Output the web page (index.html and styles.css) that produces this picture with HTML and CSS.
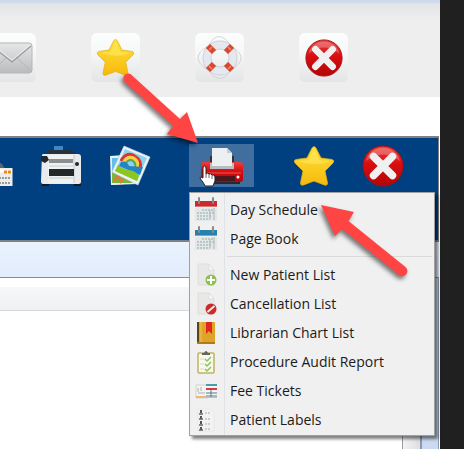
FILE: index.html
```
<!DOCTYPE html>
<html lang="en">
<head>
    <meta charset="UTF-8">
    <meta name="viewport" content="width=device-width, initial-scale=1.0">
    <title>Print Menu</title>
    <link rel="stylesheet" href="styles.css">
</head>
<body>
    <!-- Shared shapes -->
    <svg class="defs" aria-hidden="true">
        <defs>
            <linearGradient id="gold" x1="0" y1="0" x2="0" y2="1">
                <stop offset="0" stop-color="#ffe23a"/>
                <stop offset="1" stop-color="#f7b90c"/>
            </linearGradient>
            <linearGradient id="red" x1="0" y1="0" x2="0" y2="1">
                <stop offset="0" stop-color="#e8413f"/>
                <stop offset=".45" stop-color="#d90d10"/>
                <stop offset="1" stop-color="#b30507"/>
            </linearGradient>
            <linearGradient id="silver" x1="0" y1="0" x2="0" y2="1">
                <stop offset="0" stop-color="#e6e7e8"/>
                <stop offset="1" stop-color="#b9bbbd"/>
            </linearGradient>
            <symbol id="star" viewBox="0 0 42 42">
                <path d="M19 3Q21 0 23 3L28 13 39 14.500Q42 15.500 40 18L32 26 34.500 38Q34.500 41 31.500 40L21 36 10.500 40Q7.500 41 7.500 38L10 26 2 18Q0 15.500 3 14.500L14 13Z" fill="url(#gold)" stroke="#e3b11b" stroke-width=".8" stroke-linejoin="round"/>
                <path d="M21 4 26.500 15 37 16Q27 20 21 19Q12 19 5 16L15.500 15Z" fill="#fff27a" opacity=".4"/>
            </symbol>
            <symbol id="cross" viewBox="0 0 42 42">
                <circle cx="21" cy="21" r="20" fill="url(#red)" stroke="#a50f12" stroke-width="1"/>
                <path d="M4 16A17.500 17.500 0 0 1 38 16Q21 3 4 16Z" fill="#fff" opacity=".25"/>
                <path d="M11.500 11.500 30.500 30.500M30.500 11.500 11.500 30.500" stroke="#f0f0f0" stroke-width="7.500" stroke-linecap="round"/>
            </symbol>
            <symbol id="page" viewBox="0 0 26 26">
                <path d="M5 2H16L21 8V23H5Z" fill="#e8e8e7" stroke="#dededc"/>
                <path d="M16 2V8H21Z" fill="#f8f8f8" stroke="#dadada" stroke-width=".7"/>
            </symbol>
            <symbol id="calendar" viewBox="0 0 26 26">
                <path d="M2 9H24V24H2Z" fill="#e4e7e8"/>
                <path d="M9 13H20M4 16H22M4 19H19M4 22H17" stroke="#b9c9c9" stroke-width="2" stroke-dasharray="2 1"/>
                <path d="M17 13V22M21 11V23" stroke="#b0b8bb"/>
                <path d="M2 4H24V10H2Z" fill="currentColor"/>
                <path d="M6 1V6M20 1V6" stroke="#8a8a8c" stroke-width="2" stroke-linecap="round"/>
                <path d="M2 10H24" stroke="#fff" stroke-width=".7"/>
            </symbol>
        </defs>
    </svg>

    <div class="window">
        <header class="banner">
            <button class="tile" aria-label="Mail">
                <svg viewBox="0 0 49 49">
                    <rect x="4" y="10" width="41" height="30" rx="3" fill="url(#silver)" stroke="#b4b6b8"/>
                    <path d="M5 38 19 25M44 38 30 25" fill="none" stroke="#b4b6b8"/>
                    <path d="M5 13 25 29 44 13" fill="none" stroke="#999b9d" stroke-width="1.200"/>
                    <path d="M6 12 25 27 43 12" fill="none" stroke="#f4f4f4" stroke-width=".8"/>
                </svg>
            </button>
            <button class="tile" aria-label="Favorites">
                <svg viewBox="0 0 49 49"><use href="#star" x="5" y="5" width="39" height="39"/></svg>
            </button>
            <button class="tile" aria-label="Help">
                <svg viewBox="0 0 49 49">
                    <path d="M13 13Q24 -6 36 13Q56 25 36 37Q25 54 13 37Q-7 25 13 13Z" fill="none" stroke="#d3d6d8"/>
                    <circle cx="25" cy="25" r="13" fill="none" stroke="#cdd0d7" stroke-width="9"/>
                    <circle cx="25" cy="25" r="13" fill="none" stroke="#e6e8ef" stroke-width="7"/>
                    <path d="M13 13 19 19M37 13 31 19M13 37 19 31M37 37 31 31" stroke="#d9482f" stroke-width="6"/>
                    <path d="M14 17 17 14M33 14 36 17M14 33 17 36M33 36 36 33" stroke="#ee8871" stroke-width="1.500"/>
                </svg>
            </button>
            <button class="tile" aria-label="Exit">
                <svg viewBox="0 0 49 49"><use href="#cross" x="6" y="6" width="38" height="38"/></svg>
            </button>
        </header>

        <main class="app">
            <nav class="toolbar">
                <button class="tool" aria-label="Cards">
                    <svg viewBox="0 0 42 42">
                        <path d="M22 18Q28 14 33 22V26H22Z" fill="#59656d"/>
                        <path d="M2 23H41.500V41H2Z" fill="#ececea"/>
                        <path d="M2 26H41" stroke="#fff" stroke-width="3"/>
                        <path d="M33 27H41" stroke="#e88b1d" stroke-width="3" stroke-dasharray="3 1"/>
                        <path d="M4 33H39M4 38H40" stroke="#969b9e" stroke-width="2" stroke-dasharray="2 1"/>
                    </svg>
                </button>
                <button class="tool" aria-label="Scanner">
                    <svg viewBox="0 0 42 42">
                        <path d="M14 1H23V7H14Z" fill="#3d87c9"/>
                        <path d="M9 5H32L36 10H6Z" fill="#27323c"/>
                        <path d="M2 36H9V41H2ZM34 36H41V41H34Z" fill="#151a20"/>
                        <path d="M2 10Q2 9 4 9H38Q41 9 41 12V37Q41 39 39 39H3Q1 39 1 36Z" fill="#e9eaeb"/>
                        <path d="M8 10H34V38H8Z" fill="#f0f1f1"/>
                        <path d="M34 10V38" stroke="#c4c6c8"/>
                        <path d="M9 14H33V18H9Z" fill="#8c8f92"/>
                        <path d="M9 21H33M9 33H33" stroke="#c8cacc"/>
                        <path d="M9 24H34V31H9Z" fill="#24272a"/>
                        <path d="M1 11H7L9 15L5 18L1 16Z" fill="#23272b"/>
                        <circle cx="37" cy="19" r="2" fill="#22262a"/>
                    </svg>
                </button>
                <button class="tool" aria-label="Photos">
                    <svg viewBox="0 0 42 42">
                        <path d="M1 11 15 10V39L2 40Z" fill="#e8f0f1"/>
                        <path d="M3 28H10L28 39 3 40Z" fill="#e8f0f1"/>
                        <path d="M3 13H14V28H3Z" fill="#65bce4"/>
                        <path d="M3 26H14L24 38H3Z" fill="#7bb53d"/>
                        <path d="M5 36 9 30 12 37 16 32" fill="none" stroke="#e57a35" stroke-width="2"/>
                        <path d="M15 1 41 12 29 40 3 27Z" fill="#eef4f5" stroke="#bdced5" stroke-width=".7"/>
                        <path d="M16 4 38 13 28 36 6 26Z" fill="#8dd2f1"/>
                        <path d="M12 16Q18 5 27 12Q33 16 31 23" fill="none" stroke="#dd3430" stroke-width="3"/>
                        <path d="M14 18Q20 9 26 14Q30 17 28 23" fill="none" stroke="#f6d23b" stroke-width="3"/>
                        <path d="M16 19Q21 12 25 17Q27 19 26 23" fill="none" stroke="#57a756" stroke-width="2"/>
                        <path d="M12 17Q18 15 20 21L34 22L31 30L10 21Z" fill="#2583c9"/>
                        <path d="M9 20Q15 25 20 25Q27 26 30 31L28 36L6 26Z" fill="#8bc71f"/>
                    </svg>
                </button>
                <div class="print">
                    <button class="tool tool-active" aria-label="Print" aria-haspopup="menu" aria-expanded="true">
                        <svg viewBox="0 0 42 42">
                            <path d="M9 11H33V26H9Z" fill="#303438"/>
                            <path d="M4 35H39V39H4Z" fill="#252a31"/>
                            <path d="M2 17Q0 17 0 20V34Q0 37 3 37H39Q42 37 42 34V20Q42 17 39 17Z" fill="url(#red)"/>
                            <path d="M9 18H33V24H9Z" fill="#b9bdc1"/>
                            <path d="M11 3H26L31 8V21H11Z" fill="#edf0f2"/>
                            <path d="M26 3V8H31Z" fill="#c6cdd1"/>
                            <path d="M2 28H40" stroke="#ee5a50"/>
                            <path d="M14 31H34V36H14Z" fill="#4b171a"/>
                            <circle cx="37" cy="32" r="1.500" fill="#fff"/>
                        </svg>
                    </button>
                    <ul class="menu">
                        <li><button class="item">
                            <svg class="day" viewBox="0 0 26 26"><use href="#calendar"/></svg>
                            <span>Day Schedule</span>
                        </button></li>
                        <li><button class="item">
                            <svg class="pages" viewBox="0 0 26 26"><use href="#calendar"/></svg>
                            <span>Page Book</span>
                        </button></li>
                        <li class="separator"></li>
                        <li><button class="item">
                            <svg viewBox="0 0 26 26">
                                <use href="#page"/>
                                <circle cx="18" cy="18" r="5.500" fill="#8cc152"/>
                                <path d="M18 14V22M14 18H22" stroke="#fff" stroke-width="2"/>
                            </svg>
                            <span>New Patient List</span>
                        </button></li>
                        <li><button class="item">
                            <svg viewBox="0 0 26 26">
                                <use href="#page"/>
                                <circle cx="18" cy="18" r="5.500" fill="#cc2b2b"/>
                                <path d="M14.500 21 21.500 15" stroke="#f6e5e5" stroke-width="2"/>
                            </svg>
                            <span>Cancellation List</span>
                        </button></li>
                        <li><button class="item">
                            <svg viewBox="0 0 26 26">
                                <rect x="4" y="2" width="18" height="22" rx="1" fill="#dca52a"/>
                                <path d="M5 2V24" stroke="#59431d" stroke-width="2"/>
                                <path d="M8 2V24" stroke="#f0c355"/>
                                <path d="M4 23H22" stroke="#b27b15" stroke-width="2"/>
                                <path d="M13 2H19V14L16 11L13 14Z" fill="#e2251d"/>
                            </svg>
                            <span>Librarian Chart List</span>
                        </button></li>
                        <li><button class="item">
                            <svg viewBox="0 0 26 26">
                                <rect x="5" y="4" width="16" height="20" rx="1" fill="#f8f9ee" stroke="#c0b25c" stroke-width="1.500"/>
                                <path d="M9 6V4H11Q13 0 15 4H17V6Z" fill="#60676c"/>
                                <path d="M12 10 14 12 18 8M12 15 14 17 18 13M12 20 14 22 18 18" fill="none" stroke="#8bc45e" stroke-width="1.500"/>
                                <path d="M7 10H11M7 15H11M7 20H11" stroke="#d5d9d0"/>
                            </svg>
                            <span>Procedure Audit Report</span>
                        </button></li>
                        <li><button class="item">
                            <svg viewBox="0 0 26 26">
                                <path d="M3 7H15V20H3Z" fill="#f3f3f3" stroke="#d7d3cd"/>
                                <path d="M3 18H24V20H3Z" fill="#e8b87c"/>
                                <path d="M5 14V10M8 13V9M5 15H12" stroke="#a9b0b2"/>
                                <path d="M13 6H24V19H13Z" fill="#f3f5f6"/>
                                <path d="M13 7H24" stroke="#47a0a8" stroke-width="2"/>
                                <path d="M13 11H24" stroke="#d83b3f" stroke-width="2"/>
                                <path d="M13 15H24M13 18H24M18 12V19" stroke="#5d7885"/>
                            </svg>
                            <span>Fee Tickets</span>
                        </button></li>
                        <li><button class="item">
                            <svg viewBox="0 0 26 26">
                                <path d="M5 2H17L21 6V24H5Z" fill="#f3f3f3" stroke="#e8e8e8"/>
                                <path d="M8 3V6M8 9V12M8 14V17M8 20V23" stroke="#555" stroke-width="2"/>
                                <path d="M6 7H10M6 12H10M6 18H10M6 23H10" stroke="#666" stroke-width="1.500"/>
                                <path d="M12 6H18M12 12H18M12 17H18M12 22H18" stroke="#aaa" stroke-dasharray="2 1"/>
                            </svg>
                            <span>Patient Labels</span>
                        </button></li>
                    </ul>
                    <!-- Mouse pointer over the print button -->
                    <svg class="pointer" viewBox="0 0 17 22" aria-hidden="true">
                        <path d="M4 13V3Q4 1 5.500 1T7 3V9Q9 7 10 9Q12 8 13 10Q16 9 16 12V16Q15 18 14 21H6Q5 18 1.500 14Q0 11 4 13Z" fill="#fff" stroke="#222" stroke-linejoin="round"/>
                        <path d="M7 9V13M10 9V13M13 10V14" stroke="#444" stroke-width=".8"/>
                    </svg>
                </div>
                <button class="tool" aria-label="Favorites">
                    <svg viewBox="0 0 42 42"><use href="#star"/></svg>
                </button>
                <button class="tool" aria-label="Close">
                    <svg viewBox="0 0 42 42"><use href="#cross"/></svg>
                </button>
            </nav>
            <div class="subbar"></div>
            <div class="content">
                <div class="sheet"></div>
                <div class="scrollbar"></div>
                <div class="edge"></div>
            </div>
        </main>
    </div>

    <!-- Callout arrows -->
    <svg class="arrow arrow-print" viewBox="0 0 90 80" aria-hidden="true">
        <path d="M10 15A5 5 0 0 1 16.500 8L66 53 73 46 84 77 53 68 59 60Z" fill="#ff4444"/>
    </svg>
    <svg class="arrow arrow-day" viewBox="0 0 90 80" aria-hidden="true">
        <path d="M0 0 33 7 27.500 16 84.500 62A5 5 0 0 1 78 70L21 24 14 31Z" fill="#ff4444"/>
    </svg>
</body>
</html>
```
FILE: styles.css
```
* {
    box-sizing: border-box;
}
body {
    position: relative;
    display: flex;
    min-height: 100vh;
    margin: 0;
    padding-right: 24px;
    overflow: hidden;
    background-color: #202020;
    font-family: "Open Sans", "Noto Sans", sans-serif;
    font-size: 14px;
    color: #1b1b1b;
}
button {
    margin: 0;
    padding: 0;
    border: none;
    background: none;
    font: inherit;
    color: inherit;
}
svg {
    display: block;
}
.defs {
    position: absolute;
    width: 0;
    height: 0;
}
.window {
    flex: 1;
    display: flex;
    flex-direction: column;
    min-width: 0;
    background: white;
}

/* Top banner */
.banner {
    display: flex;
    gap: 55px;
    padding: 30px 0 15px;
    border-top: 3px solid #cfdaec;
    background: linear-gradient(#e2e4e6, #eeeeee 18px);
}
.tile {
    flex: none;
    width: 49px;
    height: 49px;
    border-radius: 6px;
    background: linear-gradient(#fcfdfd, #f6f7f7 40%, #e3e5e6);
}
.tile:first-child {
    margin-left: -13px;
}

/* Application frame */
.app {
    flex: 1;
    display: flex;
    flex-direction: column;
    margin: 39px 1px 0 0;
}
.toolbar {
    display: flex;
    gap: 4px;
    padding: 6px 0 53px;
    border: solid #7d8186;
    border-width: 2px 1px 2px 0;
    background-color: #004080;
}
.tool {
    flex: none;
    display: flex;
    align-items: center;
    justify-content: center;
    width: 65px;
    height: 43px;
}
.tool svg {
    width: 42px;
    height: 42px;
}
.toolbar > .tool:first-child {
    margin-left: -41px;
}
.tool-active {
    background-color: #3f6e9f;
}
.print {
    position: relative;
    margin: 0 23px;
}
.pointer {
    position: absolute;
    top: 21px;
    left: 10px;
    width: 17px;
    height: 22px;
}
.subbar {
    height: 36px;
    border-bottom: 1px solid #858ba5;
    background: linear-gradient(#eaf2fe, #e2ecfb);
}
.content {
    flex: 1;
    display: flex;
}
.sheet {
    flex: 1;
    border-right: 1px solid #9a9ca1;
    background: linear-gradient(#f6f7f9, #f0f1f3) 0 9px / 100% 23px no-repeat;
}
.sheet::before {
    content: "";
    display: block;
    height: 32px;
    border-bottom: 1px solid #d6d8db;
}
.scrollbar {
    width: 17px;
    background: linear-gradient(90deg, #f3f3f3, #dedee2);
}
.edge {
    width: 19px;
    border: solid #8d99b2;
    border-width: 0 1px 0 2px;
    background-color: #cbdaf1;
}

/* Print menu */
.menu {
    position: absolute;
    z-index: 1;
    top: 48px;
    left: 0;
    width: 246px;
    margin: 0;
    padding: 2px 2px 1px;
    border: 1px solid #a0a0a0;
    background: linear-gradient(90deg, #f0f0f0 34px, #dfe3e8 34px, #dfe3e8 35px, #f0f0f0 35px);
    box-shadow: 3px 3px 3px rgba(0, 0, 0, 0.5);
    list-style: none;
}
.item {
    display: flex;
    align-items: center;
    gap: 11px;
    width: 100%;
    height: 29px;
    padding-left: 1px;
    text-align: left;
    white-space: nowrap;
}
.item svg {
    width: 26px;
    height: 26px;
}
.day {
    color: #c92c2f;
}
.pages {
    color: #2682ad;
}
.separator {
    height: 7px;
    margin-left: 35px;
    background: linear-gradient(#dadada, #dadada) 0 3px / 100% 1px no-repeat;
}

/* Callout arrows */
.arrow {
    position: absolute;
    z-index: 2;
    width: 90px;
    height: 80px;
    overflow: visible;
    filter: drop-shadow(-2px 3px 2px rgba(0, 0, 0, 0.5));
    pointer-events: none;
}
.arrow-print {
    top: 66px;
    left: 114px;
}
.arrow-day {
    top: 205px;
    left: 321px;
}
```
